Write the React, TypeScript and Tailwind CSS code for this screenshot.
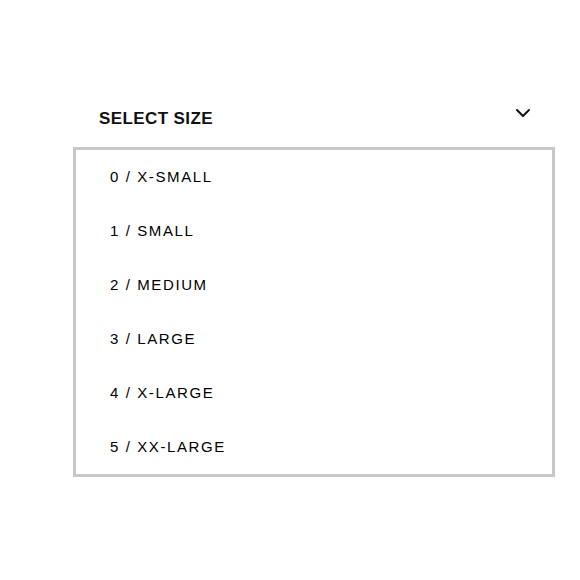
const sizes = ['0 / X-SMALL', '1 / SMALL', '2 / MEDIUM', '3 / LARGE', '4 / X-LARGE', '5 / XX-LARGE'];

function Chevron() {
    return (
        <svg width="24" height="24" viewBox="0 0 24 24" fill="none" stroke="#111" strokeWidth="2" strokeLinecap="round" strokeLinejoin="round">
            <path d="m6 9 6 6 6-6" />
        </svg>
    );
}

export default function App() {
    return (
        <div className="w-[580px] h-[580px] bg-white font-['Liberation_Sans',Arial,sans-serif] text-[#111]">
            <div className="pt-[101px] pl-[73px] w-[555px]">
                <div className="flex items-start justify-between pl-[26px] pr-[20px]">
                    <span className="mt-[8px] text-[17px] font-bold tracking-[0.4px] leading-[20px]">SELECT SIZE</span>
                    <Chevron />
                </div>
                <ul className="mt-[18px] border-[3px] border-[#c8c8c8] bg-white">
                    {sizes.map((s) => (
                        <li key={s} className="h-[54px] flex items-center pl-[34px] text-[15px] tracking-[1.6px] text-black">
                            {s}
                        </li>
                    ))}
                </ul>
            </div>
        </div>
    );
}
